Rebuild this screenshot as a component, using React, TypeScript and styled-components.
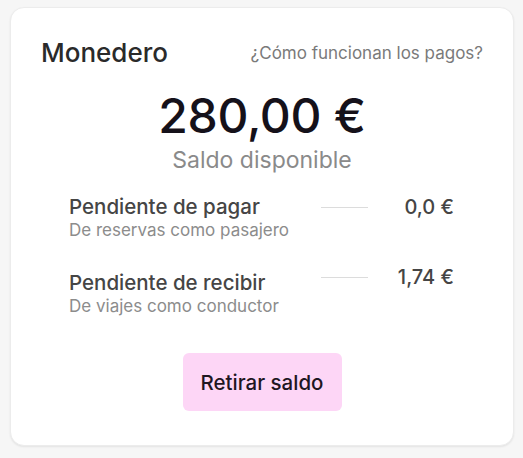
import styled, { createGlobalStyle } from "styled-components";

const GlobalStyle = createGlobalStyle`
  html, body {
    margin: 0;
    padding: 0;
    background-color: #f6f6f6;
  }
  body {
    font-family: Inter, "Noto Sans", sans-serif;
  }
`;

interface PendingItem {
  title: string;
  subtitle: string;
  amount: string;
  lift?: boolean;
}

const pending: PendingItem[] = [
  { title: "Pendiente de pagar", subtitle: "De reservas como pasajero", amount: "0,0 €" },
  { title: "Pendiente de recibir", subtitle: "De viajes como conductor", amount: "1,74 €", lift: true },
];

function App() {
  return (
    <Page>
      <GlobalStyle />
      <Card>
        <Header>
          <Title>Monedero</Title>
          <HelpLink>¿Cómo funcionan los pagos?</HelpLink>
        </Header>
        <Balance>
          <Amount>280,00 €</Amount>
          <AmountLabel>Saldo disponible</AmountLabel>
        </Balance>
        <PendingList>
          {pending.map((item) => (
            <PendingRow key={item.title}>
              <PendingText>
                <PendingTitle>{item.title}</PendingTitle>
                <PendingSubtitle>{item.subtitle}</PendingSubtitle>
              </PendingText>
              <Divider $lift={item.lift} />
              <PendingAmount $lift={item.lift}>{item.amount}</PendingAmount>
            </PendingRow>
          ))}
        </PendingList>
        <Footer>
          <WithdrawButton>Retirar saldo</WithdrawButton>
        </Footer>
      </Card>
    </Page>
  );
}

export default App;

const Page = styled.div`
  width: 523px;
  height: 458px;
  box-sizing: border-box;
  padding: 7px 9px 12px 10px;
`;

const Card = styled.div`
  box-sizing: border-box;
  width: 504px;
  height: 439px;
  padding: 29px 30px 0;
  background-color: #ffffff;
  border: 1px solid #ececec;
  border-radius: 14px;
  box-shadow: 0 1px 2px rgba(0, 0, 0, 0.08);
  display: flex;
  flex-direction: column;
`;

const Header = styled.div`
  display: flex;
  justify-content: space-between;
  align-items: center;
  height: 32px;
`;

const Title = styled.h2`
  margin: 0;
  font-size: 26px;
  font-weight: 500;
  line-height: 32px;
  color: #2a2a2a;
`;

const HelpLink = styled.a`
  font-size: 17px;
  line-height: 22px;
  color: #7a7a7a;
  cursor: pointer;
`;

const Balance = styled.div`
  display: flex;
  flex-direction: column;
  align-items: center;
  margin-top: 19px;
`;

const Amount = styled.div`
  font-size: 48px;
  font-weight: 500;
  line-height: 56px;
  color: #15111a;
  letter-spacing: -0.3px;
`;

const AmountLabel = styled.div`
  margin-top: 2px;
  font-size: 23px;
  line-height: 28px;
  color: #8a8a8a;
`;

const PendingList = styled.div`
  display: flex;
  flex-direction: column;
  gap: 31px;
  margin-top: 21px;
  padding: 0 29px 0 28px;
`;

const PendingRow = styled.div`
  display: grid;
  grid-template-columns: 1fr 47px 86px;
  align-items: start;
`;

const PendingText = styled.div`
  display: flex;
  flex-direction: column;
  gap: 1px;
`;

const PendingTitle = styled.div`
  font-size: 20.5px;
  font-weight: 500;
  line-height: 24px;
  color: #454545;
`;

const PendingSubtitle = styled.div`
  font-size: 17px;
  line-height: 20px;
  color: #8c8c8c;
`;

const Divider = styled.div<{ $lift?: boolean }>`
  height: 1px;
  background-color: #dcdcdc;
  margin-top: ${(p) => (p.$lift ? "6px" : "12px")};
`;

const PendingAmount = styled.div<{ $lift?: boolean }>`
  font-size: 20px;
  font-weight: 500;
  line-height: 24px;
  color: #454545;
  text-align: right;
  margin-top: ${(p) => (p.$lift ? "-6px" : "0")};
`;

const Footer = styled.div`
  display: flex;
  justify-content: center;
  margin-top: 37px;
`;

const WithdrawButton = styled.button`
  width: 159px;
  height: 58px;
  border: none;
  border-radius: 6px;
  background-color: #fdd6f6;
  font-family: inherit;
  font-size: 20.5px;
  font-weight: 500;
  color: #1f1622;
  cursor: pointer;
`;
